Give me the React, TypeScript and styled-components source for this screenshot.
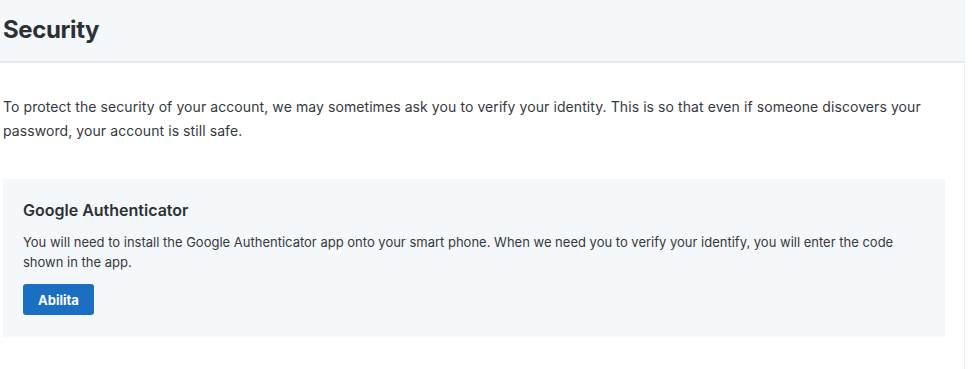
import styled, { createGlobalStyle } from "styled-components";

const GlobalStyle = createGlobalStyle`
  body {
    margin: 0;
    background: #ffffff;
    font-family: Inter, "Noto Sans", sans-serif;
    color: #33363a;
  }
`;

const Page = styled.div`
  width: 965px;
  min-height: 369px;
  box-sizing: border-box;
  border-right: 1px solid #eef1f4;
`;

const Header = styled.header`
  height: 61px;
  display: flex;
  align-items: center;
  padding: 0 3px;
  background: #f5f8fb;
  border-bottom: 2px solid #e4e9ee;
`;

const Title = styled.h1`
  margin: 0 0 3px;
  font-size: 24px;
  font-weight: 700;
  color: #2e3134;
  letter-spacing: -0.4px;
`;

const Content = styled.section`
  padding: 32px 19px 0 3px;
`;

const Intro = styled.p`
  margin: 0;
  font-size: 14px;
  line-height: 24px;
  color: #36393d;
  letter-spacing: 0.08px;
`;

const Card = styled.div`
  margin-top: 36px;
  padding: 19px 20px 22px;
  background: #f5f8fb;
  display: flex;
  flex-direction: column;
  align-items: flex-start;
`;

const CardTitle = styled.h3`
  margin: 0;
  font-size: 16px;
  line-height: 24px;
  font-weight: 600;
  color: #2e3134;
`;

const CardText = styled.p`
  margin: 10px 0 0;
  font-size: 13px;
  line-height: 20px;
  color: #36393d;
`;

const Button = styled.button`
  margin-top: 12px;
  height: 31px;
  padding: 0 15px;
  border: none;
  border-radius: 3px;
  background: #1a6fc2;
  color: #ffffff;
  font-family: inherit;
  font-size: 13px;
  font-weight: 700;
  cursor: pointer;
`;

export default function App() {
  return (
    <>
      <GlobalStyle />
      <Page>
        <Header>
          <Title>Security</Title>
        </Header>
        <Content>
          <Intro>
            To protect the security of your account, we may sometimes ask you to verify your identity. This is so that
            even if someone discovers your password, your account is still safe.
          </Intro>
          <Card>
            <CardTitle>Google Authenticator</CardTitle>
            <CardText>
              You will need to install the Google Authenticator app onto your smart phone. When we need you to verify
              your identify, you will enter the code shown in the app.
            </CardText>
            <Button>Abilita</Button>
          </Card>
        </Content>
      </Page>
    </>
  );
}
